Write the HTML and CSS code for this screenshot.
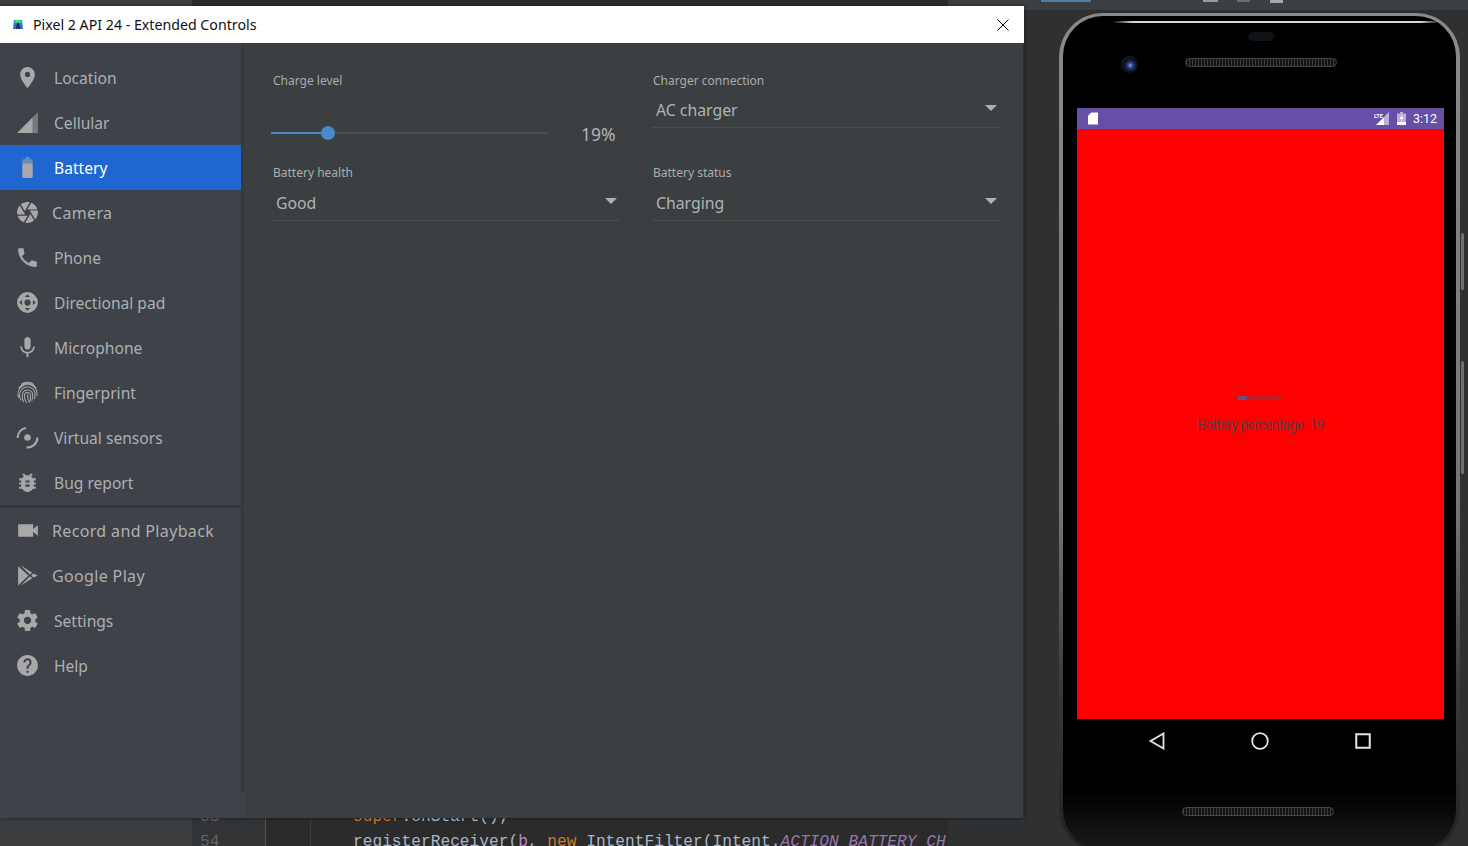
FILE: index.html
```html
<!DOCTYPE html>
<html lang="en">

<head>
  <meta charset="UTF-8">
  <title>Pixel 2 API 24 - Extended Controls</title>
  <link rel="stylesheet" href="styles.css">
</head>

<body>
  <!-- IDE behind the windows -->
  <div class="ide">
    <div class="ide-top ide-top-left"></div>
    <div class="ide-top ide-top-mid"></div>
    <div class="ide-top ide-top-right">
      <span class="tool-bit tool-blue"></span>
      <span class="tool-bit tool-grey"></span>
      <span class="tool-bit tool-dim"></span>
      <span class="tool-bit tool-light"></span>
    </div>
    <div class="project-panel"></div>
    <div class="gutter">
      <div class="line-num">53</div>
      <div class="line-num">54</div>
    </div>
    <div class="fold-gutter"></div>
    <div class="code">
      <div class="code-line"><span class="kw">super</span>.onStart();</div>
      <div class="code-line">registerReceiver(<span class="param">b</span>, <span class="kw">new</span> IntentFilter(Intent.<span class="const">ACTION_BATTERY_CH</span></div>
    </div>
    <div class="ide-right"></div>
  </div>

  <!-- emulator extended controls -->
  <div class="window">
    <div class="titlebar">
      <svg class="app-icon" viewBox="0 0 12 12">
        <path d="M2 1h8l1 9H1z" fill="#2f6fd6" />
        <path d="M3 1h6l.5 3h-7z" fill="#3ddc84" />
        <path d="M4.5 10l1.5-6 1.5 6" fill="none" stroke="#10233f" stroke-width="1.3" />
      </svg>
      <span class="title">Pixel 2 API 24 - Extended Controls</span>
      <svg class="close" viewBox="0 0 12 12">
        <path d="M.5.5l11 11M11.5.5l-11 11" stroke="#000" stroke-width="1" fill="none" />
      </svg>
    </div>
    <div class="window-body">
      <nav class="sidebar">
        <a class="nav-item">
          <svg class="icon" viewBox="0 0 24 24"><path d="M12 2C8.13 2 5 5.13 5 9c0 5.25 7 13 7 13s7-7.75 7-13c0-3.87-3.13-7-7-7zm0 9.5a2.5 2.5 0 0 1 0-5 2.5 2.5 0 0 1 0 5z" /></svg>
          <span>Location</span>
        </a>
        <a class="nav-item">
          <svg class="icon" viewBox="0 0 24 24"><path d="M2 22L17 7v15z" /><path d="M17 7l5-5v20h-5z" opacity=".55" /></svg>
          <span>Cellular</span>
        </a>
        <a class="nav-item active">
          <svg class="icon" viewBox="0 0 24 24"><path d="M17 8v12.67c0 .73-.6 1.33-1.34 1.33H8.33C7.6 22 7 21.4 7 20.67V8z" /><path d="M15.67 4H14V2h-4v2H8.33C7.6 4 7 4.6 7 5.33V8h10V5.33C17 4.6 16.4 4 15.67 4z" opacity=".55" /></svg>
          <span>Battery</span>
        </a>
        <a class="nav-item tight">
          <svg class="icon" viewBox="0 0 24 24"><path d="M9.4 10.5l4.77-8.26C13.47 2.09 12.75 2 12 2c-2.4 0-4.6.85-6.32 2.25l3.66 6.35.06-.1zM21.54 9c-.92-2.92-3.15-5.26-6-6.34L11.88 9h9.66zm.26 1h-7.49l.29.5 4.76 8.25C21 16.97 22 14.61 22 12c0-.69-.07-1.35-.2-2zM8.54 12l-3.9-6.75C3.01 7.03 2 9.39 2 12c0 .69.07 1.35.2 2h7.49l-1.15-2zm-6.08 3c.92 2.92 3.15 5.26 6 6.34L12.12 15H2.46zm11.27 0l-3.9 6.76c.7.15 1.42.24 2.17.24 2.4 0 4.6-.85 6.32-2.25l-3.66-6.35-.93 1.6z" /></svg>
          <span>Camera</span>
        </a>
        <a class="nav-item">
          <svg class="icon" viewBox="0 0 24 24"><path d="M6.62 10.79c1.44 2.83 3.76 5.14 6.59 6.59l2.2-2.2c.27-.27.67-.36 1.02-.24 1.12.37 2.33.57 3.57.57.55 0 1 .45 1 1V20c0 .55-.45 1-1 1-9.39 0-17-7.61-17-17 0-.55.45-1 1-1h3.5c.55 0 1 .45 1 1 0 1.25.2 2.45.57 3.57.11.35.03.74-.25 1.02l-2.2 2.2z" /></svg>
          <span>Phone</span>
        </a>
        <a class="nav-item">
          <svg class="icon" viewBox="0 0 24 24"><path fill-rule="evenodd" d="M12 2a10 10 0 1 0 0 20 10 10 0 0 0 0-20zm0 2l2.5 2.8h-5zM4 12l2.8-2.5v5zm16 0l-2.8 2.5v-5zm-8 8l-2.5-2.8h5zm0-11a3 3 0 1 1 0 6 3 3 0 0 1 0-6z" /></svg>
          <span>Directional pad</span>
        </a>
        <a class="nav-item">
          <svg class="icon" viewBox="0 0 24 24"><path d="M12 14c1.66 0 3-1.34 3-3V5c0-1.66-1.34-3-3-3S9 3.34 9 5v6c0 1.66 1.34 3 3 3zm5.3-3c0 3-2.54 5.1-5.3 5.1S6.7 14 6.7 11H5c0 3.41 2.72 6.23 6 6.72V21h2v-3.28c3.28-.48 6-3.3 6-6.72h-1.7z" /></svg>
          <span>Microphone</span>
        </a>
        <a class="nav-item">
          <svg class="icon icon-lines" viewBox="0 0 24 24">
            <path d="M6 4.2A9.8 9.8 0 0 1 18 4.2M3.4 8.2A10.2 10.2 0 0 1 20.6 8.2" />
            <path d="M3.6 17a9.5 9.5 0 0 1 3-11 9 9 0 0 1 14.5 7.2v2" />
            <path d="M6 19.5a8 8 0 0 1-.7-8.6 7.3 7.3 0 0 1 13.9 2.6c0 2-.1 3.2-.6 4.8" />
            <path d="M8.6 21a9 9 0 0 1-1.4-7.6 5 5 0 0 1 9.8.6c0 2.4-.1 4.2-.9 6" />
            <path d="M11.6 22a10 10 0 0 1-2.5-8 3 3 0 0 1 5.8.3c0 2.6-.2 5-.8 7.2" />
            <path d="M12 13.6c-.2 3.4.6 6 2 8" />
          </svg>
          <span>Fingerprint</span>
        </a>
        <a class="nav-item">
          <svg class="icon icon-lines icon-thick" viewBox="0 0 24 24">
            <circle class="dot" cx="12" cy="12" r="3.2" />
            <path d="M2.5 12.5A9.5 9.5 0 0 1 10.5 2.800" />
            <path d="M21.5 12A9.5 9.5 0 0 1 11 21.5" />
          </svg>
          <span>Virtual sensors</span>
        </a>
        <a class="nav-item">
          <svg class="icon" viewBox="0 0 24 24"><path d="M20 8h-2.81c-.45-.78-1.07-1.45-1.82-1.96L17 4.41 15.59 3l-2.17 2.17C12.96 5.06 12.49 5 12 5c-.49 0-.96.06-1.41.17L8.41 3 7 4.41l1.62 1.63C7.88 6.55 7.26 7.22 6.81 8H4v2h2.09c-.05.33-.09.66-.09 1v1H4v2h2v1c0 .34.04.67.09 1H4v2h2.81c1.04 1.79 2.97 3 5.19 3s4.15-1.21 5.19-3H20v-2h-2.09c.05-.33.09-.66.09-1v-1h2v-2h-2v-1c0-.34-.04-.67-.09-1H20V8zm-6 8h-4v-2h4v2zm0-4h-4v-2h4v2z" /></svg>
          <span>Bug report</span>
        </a>
        <div class="nav-divider"></div>
        <a class="nav-item tight">
          <svg class="icon" viewBox="0 0 24 24"><path d="M3 6h14.5v4.5L22 7v10l-4.500-3.500V18H3z" /></svg>
          <span>Record and Playback</span>
        </a>
        <a class="nav-item tight">
          <svg class="icon" viewBox="0 0 24 24"><path d="M3 3l10 9-10 9.500z" /><path d="M5 2l11.500 7.300-2 2zM5 22l11.500-7.300-2-2z" /><path d="M17.500 10l4.500 2-4.500 2-1.800-2z" /></svg>
          <span>Google Play</span>
        </a>
        <a class="nav-item">
          <svg class="icon" viewBox="0 0 24 24"><path d="M19.43 12.98c.04-.32.07-.64.07-.98s-.03-.66-.07-.98l2.11-1.65c.19-.15.24-.42.12-.64l-2-3.46c-.12-.22-.39-.3-.61-.22l-2.49 1c-.52-.4-1.08-.73-1.69-.98l-.38-2.65C14.46 2.18 14.25 2 14 2h-4c-.25 0-.46.18-.49.42l-.38 2.65c-.61.25-1.17.59-1.69.98l-2.49-1c-.23-.09-.49 0-.61.22l-2 3.46c-.13.22-.07.49.12.64l2.11 1.65c-.04.32-.07.65-.07.98s.03.66.07.98l-2.11 1.65c-.19.15-.24.42-.12.64l2 3.46c.12.22.39.3.61.22l2.49-1c.52.4 1.08.73 1.69.98l.38 2.65c.03.24.24.42.49.42h4c.25 0 .46-.18.49-.42l.38-2.65c.61-.25 1.17-.59 1.69-.98l2.49 1c.23.09.49 0 .61-.22l2-3.46c.12-.22.07-.49-.12-.64l-2.11-1.65zM12 15.5c-1.93 0-3.5-1.57-3.5-3.5s1.57-3.5 3.5-3.5 3.5 1.57 3.5 3.5-1.57 3.5-3.5 3.5z" /></svg>
          <span>Settings</span>
        </a>
        <a class="nav-item">
          <svg class="icon" viewBox="0 0 24 24"><path d="M12 2C6.48 2 2 6.48 2 12s4.48 10 10 10 10-4.48 10-10S17.52 2 12 2zm1 17h-2v-2h2v2zm2.07-7.75l-.9.92C13.45 12.9 13 13.5 13 15h-2v-.5c0-1.1.45-2.1 1.17-2.83l1.24-1.26c.37-.36.59-.86.59-1.41 0-1.1-.9-2-2-2s-2 .9-2 2H8c0-2.21 1.79-4 4-4s4 1.79 4 4c0 .88-.36 1.68-.93 2.25z" /></svg>
          <span>Help</span>
        </a>
      </nav>

      <main class="panel">
        <section class="field">
          <div class="field-label">Charge level</div>
          <div class="slider-row">
            <div class="slider">
              <div class="slider-fill"></div>
              <div class="slider-thumb"></div>
              <div class="slider-rest"></div>
            </div>
            <div class="slider-value">19%</div>
          </div>
        </section>
        <section class="field">
          <div class="field-label">Charger connection</div>
          <div class="select"><span>AC charger</span><i class="arrow"></i></div>
        </section>
        <section class="field field-lower">
          <div class="field-label">Battery health</div>
          <div class="select"><span>Good</span><i class="arrow"></i></div>
        </section>
        <section class="field field-lower">
          <div class="field-label">Battery status</div>
          <div class="select"><span>Charging</span><i class="arrow"></i></div>
        </section>
      </main>
    </div>
  </div>

  <!-- emulator phone -->
  <div class="phone">
    <i class="side-btn side-btn-power"></i>
    <i class="side-btn side-btn-volume"></i>
    <div class="phone-inner">
      <div class="phone-top">
        <div class="glint"></div>
        <div class="earpiece"></div>
        <div class="sensor-row">
          <div class="camera"></div>
          <div class="speaker"></div>
        </div>
      </div>
      <div class="screen">
        <div class="statusbar">
          <svg class="sd-icon" viewBox="0 0 11 13"><path d="M3.5 0H11v13H0V3.500z" /></svg>
          <span class="status-spacer"></span>
          <svg class="lte-icon" viewBox="0 0 16 13">
            <path d="M15 0v13H2z" fill="#fff" opacity=".55" />
            <path d="M10 5.5V13H2z" fill="#fff" />
            <text x="0" y="5.5" class="lte-text">LTE</text>
          </svg>
          <svg class="batt-icon" viewBox="0 0 9 13">
            <path d="M3 0h3v1.5h3V13H0V1.5h3z" fill="#fff" opacity=".55" />
            <path d="M0 10h9v3H0zM5.5 2L2.5 7h2L3.5 10l3-5h-2z" fill="#fff" />
          </svg>
          <span class="clock">3:12</span>
        </div>
        <div class="app-content">
          <div class="progress"><div class="progress-fill"></div></div>
          <div class="battery-text">Battery percentage: 19</div>
        </div>
      </div>
      <div class="softkeys">
        <svg class="softkey" viewBox="0 0 16 18"><path d="M14.5 1.5v15L1.5 9z" /></svg>
        <svg class="softkey" viewBox="0 0 18 18"><circle cx="9" cy="9" r="7.8" /></svg>
        <svg class="softkey" viewBox="0 0 16 16"><rect x="2" y="2" width="12" height="12" /></svg>
      </div>
      <div class="speaker speaker-bottom"></div>
    </div>
  </div>
</body>

</html>
```

FILE: styles.css
```css
* {
  box-sizing: border-box;
}

html,
body {
  height: 846px;
  margin: 0;
  overflow: hidden;
}

body {
  background: #2e3032;
  font-family: "Noto Sans", sans-serif;
  position: relative;
}

/* ide behind */
.ide {
  display: grid;
  grid-template-columns: 192px 73px 46px 637px 1fr;
  grid-template-rows: 10px 836px;
  height: 846px;
}

.ide-top-left {
  background: #3c3f41;
}

.ide-top-mid {
  background: #2b2b2b;
  grid-column: 2 / 5;
}

.ide-top-right {
  background: #3c3f41;
  position: relative;
}

.tool-bit {
  display: inline-block;
  height: 2px;
  position: absolute;
  top: 0;
}

.tool-blue {
  background: #4a7fa8;
  left: 93px;
  width: 50px;
}

.tool-grey {
  background: #9a9a9a;
  left: 255px;
  width: 15px;
}

.tool-dim {
  background: #6b6e70;
  left: 289px;
  width: 13px;
}

.tool-light {
  background: #a8a8a8;
  height: 3px;
  left: 322px;
  width: 13px;
}

.project-panel {
  background: #3a3c3e;
}

.gutter {
  background: #313335;
  color: #606366;
  display: flex;
  flex-direction: column;
  font-family: "Liberation Mono", monospace;
  font-size: 16.2px;
  justify-content: flex-end;
  line-height: 25px;
  margin-bottom: -9px;
  padding-left: 8px;
}

.fold-gutter {
  background: #2b2b2b;
  border-left: 1px solid #555;
  border-right: 1px solid #393b3d;
}

.code {
  background: #2b2b2b;
  color: #a9b7c6;
  display: flex;
  flex-direction: column;
  font-family: "Liberation Mono", monospace;
  font-size: 16.2px;
  justify-content: flex-end;
  line-height: 25px;
  margin-bottom: -9px;
  overflow: hidden;
  padding-left: 42px;
  white-space: nowrap;
}

.kw {
  color: #cc7832;
}

.param {
  color: #b389c5;
}

.const {
  color: #9876aa;
  font-style: italic;
}

.ide-right {
  background: #2e3032;
}

/* extended controls window */
.window {
  box-shadow: 0 0 3px rgba(0, 0, 0, .5);
  height: 812px;
  left: 0;
  position: absolute;
  top: 6px;
  width: 1024px;
}

.titlebar {
  align-items: center;
  background: #fff;
  color: #111;
  display: flex;
  font-size: 14.2px;
  height: 37px;
  padding: 0 15px 0 12px;
}

.app-icon {
  height: 12px;
  margin-right: 9px;
  width: 12px;
}

.title {
  flex: 1;
}

.close {
  height: 12px;
  width: 12px;
}

.window-body {
  border-right: 1px solid #2b2d2e;
  display: flex;
  height: 775px;
}

.sidebar {
  background: #3f4249;
  flex: none;
  padding-top: 12px;
  width: 241px;
}

.nav-item {
  align-items: center;
  color: #adb0b3;
  display: flex;
  font-size: 15.6px;
  gap: 14px;
  height: 45px;
  padding-left: 15px;
}

.nav-item.tight {
  font-size: 16px;
  gap: 12px;
  letter-spacing: .35px;
}

.nav-item.active {
  background: #1f66d0;
  color: #fff;
}

.icon {
  fill: #a8a8a8;
  flex: none;
  height: 25px;
  width: 25px;
}

.icon-lines {
  fill: none;
  stroke: #a8a8a8;
  stroke-width: 1;
}

.icon-thick {
  stroke-width: 2;
}

.icon-lines .dot {
  fill: #a8a8a8;
  stroke: none;
}

.nav-divider {
  background: #35373b;
  height: 3px;
}

.panel {
  align-content: start;
  background:
    linear-gradient(#3f4249, #3f4249) 0 100% / 5px 25px no-repeat,
    linear-gradient(90deg, #35373a 0, #3c3f41 4px);
  column-gap: 30px;
  display: grid;
  flex: 1;
  grid-template-columns: 350px 350px;
  padding: 29px 0 0 30px;
}

.field {
  height: 92px;
}

.field-label {
  color: #a9acae;
  font-size: 12px;
  height: 18px;
  line-height: 18px;
  padding-left: 2px;
}

.select {
  align-items: center;
  border-bottom: 1px solid #4b4d4f;
  color: #b0b3b5;
  display: flex;
  font-size: 15.8px;
  height: 38px;
  justify-content: space-between;
  padding: 2px 4px 0 5px;
}

.field-lower .select {
  margin-top: 1px;
}

.arrow {
  border-left: 6px solid transparent;
  border-right: 6px solid transparent;
  border-top: 6px solid #b0b0b0;
  margin-top: -4px;
}

.slider-row {
  align-items: center;
  display: flex;
  height: 56px;
  padding-top: 29px;
}

.slider {
  align-items: center;
  display: flex;
  width: 276px;
}

.slider-fill {
  background: #4a88c7;
  height: 2px;
  width: 50px;
}

.slider-thumb {
  background: #4a88c7;
  border-radius: 50%;
  flex: none;
  height: 14px;
  width: 14px;
}

.slider-rest {
  background: #4b4d4f;
  flex: 1;
  height: 2px;
}

.slider-value {
  color: #b0b3b5;
  font-size: 17.5px;
  margin-left: 34px;
  margin-top: 2px;
}

/* phone */
.phone {
  background: linear-gradient(#8a8a8a 0, #747474 60%, #3a3a3a 80%, #222 100%);
  border-radius: 44px;
  height: 840px;
  left: 1059px;
  padding: 3px 4px 3px 4px;
  position: absolute;
  top: 13px;
  width: 401px;
}

.side-btn {
  background: #6e6e6e;
  border-radius: 2px;
  left: 100%;
  margin-left: 1px;
  position: absolute;
  width: 3px;
}

.side-btn-power {
  height: 57px;
  top: 220px;
}

.side-btn-volume {
  height: 113px;
  top: 348px;
}

.phone-inner {
  background: linear-gradient(#000 93%, #1b1b1b 100%);
  border-radius: 40px;
  height: 100%;
  padding: 0 12px 0 14px;
}

.phone-top {
  height: 92px;
  padding-top: 5px;
}

.glint {
  background: linear-gradient(90deg, transparent, #d8d8d8 6%, #d8d8d8 94%, transparent);
  height: 2px;
  margin-left: 36px;
  width: 327px;
}

.earpiece {
  background: #0f1217;
  border-radius: 5px;
  height: 9px;
  margin: 9px auto 0;
  width: 26px;
}

.sensor-row {
  align-items: center;
  display: flex;
  margin-top: 15px;
}

.camera {
  background: radial-gradient(circle at 55% 55%, #7f9cf0 0, #243a78 22%, #0d0e16 50%, #2a2b31 100%);
  border-radius: 50%;
  flex: none;
  height: 17px;
  margin-left: 44px;
  width: 17px;
}

.speaker {
  background: repeating-linear-gradient(90deg, #3c3c37 0 1px, #141412 1px 3px);
  border: 1px solid #454541;
  border-radius: 5px;
  height: 9px;
  width: 152px;
}

.sensor-row .speaker {
  margin-left: 47px;
  margin-top: -4px;
}

.screen {
  background: #f00;
  height: 611px;
}

.statusbar {
  align-items: center;
  background: #674ea7;
  color: #fff;
  display: flex;
  height: 21px;
  padding: 0 7px 0 11px;
}

.status-spacer {
  flex: 1;
}

.sd-icon {
  fill: #fff;
  height: 13px;
  width: 10px;
}

.lte-icon {
  height: 13px;
  margin-right: 7px;
  width: 16px;
}

.lte-text {
  fill: #fff;
  font-family: Roboto, sans-serif;
  font-size: 5.5px;
  font-weight: 700;
}

.batt-icon {
  height: 13px;
  margin-right: 7px;
  width: 9px;
}

.clock {
  font-family: Roboto, sans-serif;
  font-size: 12.5px;
}

.app-content {
  align-items: center;
  display: flex;
  flex-direction: column;
  padding-top: 267px;
}

.progress {
  background: #b8222c;
  height: 4px;
  margin-right: 2px;
  width: 43px;
}

.progress-fill {
  background: #6a4f80;
  height: 100%;
  width: 9px;
}

.battery-text {
  color: #5e3a46;
  font-family: Roboto, sans-serif;
  font-size: 14px;
  letter-spacing: -.64px;
  line-height: 20px;
  margin-top: 15px;
}

.softkeys {
  align-items: center;
  display: flex;
  height: 43px;
  justify-content: center;
  padding-right: 1px;
}

.softkey {
  fill: none;
  height: 18px;
  margin: 0 42.5px;
  stroke: #e4e4e4;
  stroke-width: 1.8;
  width: 18px;
}

.speaker-bottom {
  margin: 45px 0 0 105px;
}
```
